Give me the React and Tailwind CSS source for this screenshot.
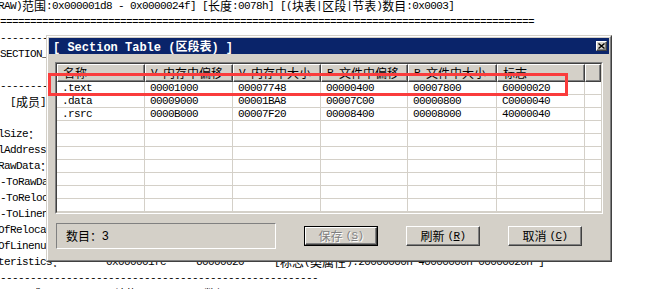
import React from 'react';

const ASCII = "font-['Liberation_Mono',monospace] text-[11px] tracking-[-0.6px]";
const CJK = "font-['Noto_Sans_CJK_SC',sans-serif] text-[12px] tracking-normal";

// split a string into ascii / cjk runs so each gets its own font
const Mix = ({ text, a = ASCII, c = CJK }) =>
    text
        .split(/([^\x00-\x7f]+)/)
        .filter(Boolean)
        .map((part, i) => (
            <span key={i} className={/[^\x00-\x7f]/.test(part) ? c : a}>
                {part}
            </span>
        ));

const consoleLines = [
    { t: 'RAW)范围:0x000001d8 - 0x0000024f] [长度:0078h] [(块表|区段|节表)数目:0x0003]', cls: '-ml-[2px]' },
    { t: '='.repeat(89) },
    { t: '-'.repeat(40) },
    { t: 'SECTION_HEADER]' },
    { t: '' },
    { t: '-'.repeat(40) },
    { t: '[成员]', cls: 'ml-[10px]' },
    { t: '' },
    { t: 'lSize：', cls: '-ml-[2px]' },
    { t: 'lAddress', cls: '-ml-[2px]' },
    { t: 'RawData：', cls: '-ml-[2px]' },
    { t: '-ToRawData' },
    { t: '-ToRelocations' },
    { t: '-ToLinenumbers' },
    { t: 'OfRelocations', cls: '-ml-[2px]' },
    { t: 'OfLinenumbers', cls: '-ml-[2px]' },
    { t: 'teristics：       0x000001fc     60000020     [标志(类属性):20000000h 40000000h 00000020h ]', cls: '-ml-[2px]' },
    { t: '-'.repeat(53) },
    { t: '     成员          结构           数据' },
];

const columns = [
    { label: '名称', w: 'w-[88px]' },
    { label: 'V.内存中偏移', w: 'w-[88px]' },
    { label: 'V.内存中大小', w: 'w-[88px]' },
    { label: 'R.文件中偏移', w: 'w-[87px]' },
    { label: 'R.文件中大小', w: 'w-[89px]' },
    { label: '标志', w: 'w-[88px]' },
];

const sections = [
    ['.text', '00001000', '00007748', '00000400', '00007800', '60000020'],
    ['.data', '00009000', '00001BA8', '00007C00', '00000800', 'C0000040'],
    ['.rsrc', '0000B000', '00007F20', '00008400', '00008000', '40000040'],
];

const rows = [...sections, ...Array.from({ length: 7 }, () => null)];

const raised =
    'border border-t-white border-l-white border-r-[#404040] border-b-[#404040] shadow-[inset_-1px_-1px_0_#808080]';

const Button = ({ label, hotkey, disabled }) => {
    const inner = (
        <div
            className={`h-full w-full flex items-center justify-center bg-[#d4d0c8] ${raised} ${
                disabled ? 'text-[#808080] [text-shadow:1px_1px_0_#fff]' : 'text-black'
            }`}
        >
            <span className={CJK}>{label}</span>
            <span className={`${ASCII} ml-[3px]`}>
                (<span className="underline">{hotkey}</span>)
            </span>
        </div>
    );
    return disabled ? (
        <div className="w-[74px] h-[20px] border border-black">{inner}</div>
    ) : (
        <div className="w-[74px] h-[20px]">{inner}</div>
    );
};

const App = () => {
    return (
        <div className="relative w-[656px] h-[289px] overflow-hidden bg-white text-black">
            {/* console text behind the window */}
            <div className="-mt-[2px] whitespace-pre">
                {consoleLines.map((line, i) => (
                    <div key={i} className={`h-[16px] leading-[16px] flex items-center ${line.cls || ''}`}>
                        <Mix text={line.t} />
                    </div>
                ))}
            </div>

            {/* Section Table window */}
            <div className="absolute left-[46px] top-[35px] w-[566px] h-[227px] bg-[#d4d0c8] border border-t-[#d4d0c8] border-l-[#d4d0c8] border-r-[#404040] border-b-[#404040]">
                <div className="h-full flex flex-col p-px border border-t-white border-l-white border-r-[#808080] border-b-[#808080]">
                    {/* Title bar */}
                    <div className="h-[16px] bg-[#0a246a] flex items-center justify-between pl-[4px] pr-[2px] text-white whitespace-pre">
                        <div className="leading-[16px]">
                            <Mix
                                text="[ Section Table (区段表) ]"
                                a="font-['Liberation_Mono',monospace] text-[12px] font-bold"
                                c="font-['Noto_Sans_CJK_SC',sans-serif] text-[12px] font-bold"
                            />
                        </div>
                        <div className={`w-[11px] h-[10px] bg-[#d4d0c8] flex items-center justify-center ${raised}`}>
                            <svg width="7" height="6" viewBox="0 0 7 6" className="block">
                                <path d="M0.5 0.5 L6.5 5.5 M6.5 0.5 L0.5 5.5" stroke="#000" strokeWidth="1.4" />
                            </svg>
                        </div>
                    </div>

                    <div className="flex flex-col px-[6px] pt-[8px]">
                        {/* list view */}
                        <div className="h-[152px] border border-t-[#808080] border-l-[#808080] border-r-white border-b-white">
                            <div className="h-full flex flex-col bg-white border border-t-[#404040] border-l-[#404040] border-r-[#d4d0c8] border-b-[#d4d0c8] overflow-hidden">
                                <div className="h-[18px] flex shrink-0">
                                    {columns.map((col) => (
                                        <div
                                            key={col.label}
                                            className={`${col.w} h-full bg-[#d4d0c8] ${raised} flex items-center pl-[5px] whitespace-pre`}
                                        >
                                            <Mix text={col.label} />
                                        </div>
                                    ))}
                                    <div className={`flex-1 h-full bg-[#d4d0c8] ${raised}`} />
                                </div>
                                {rows.map((row, r) => (
                                    <div key={r} className="h-[13px] flex shrink-0 border-b border-[#d4d0c8]">
                                        {columns.map((col, c) => (
                                            <div
                                                key={c}
                                                className={`${col.w} h-full border-r border-[#d4d0c8] pl-[5px] flex items-center ${ASCII} leading-[12px]`}
                                            >
                                                {row ? row[c] : ''}
                                            </div>
                                        ))}
                                        <div className="flex-1" />
                                    </div>
                                ))}
                            </div>
                        </div>

                        {/* bottom bar */}
                        <div className="mt-[9px] flex items-center">
                            <div className="ml-px w-[220px] h-[26px] flex items-center pl-[9px] border border-t-[#808080] border-l-[#808080] border-r-white border-b-white">
                                <span className={CJK}>数目：</span>
                                <span className="font-['Liberation_Sans',sans-serif] text-[12px]">3</span>
                            </div>
                            <div className="ml-[28px] flex gap-[28px]">
                                <Button label="保存" hotkey="S" disabled />
                                <Button label="刷新" hotkey="R" />
                                <Button label="取消" hotkey="C" />
                            </div>
                        </div>
                    </div>
                </div>
            </div>

            {/* red highlight around the .text row */}
            <div className="absolute left-[48px] top-[73px] w-[520px] h-[23px] border-[3px] border-[#fa3c3c]" />
        </div>
    );
};

export default App;
